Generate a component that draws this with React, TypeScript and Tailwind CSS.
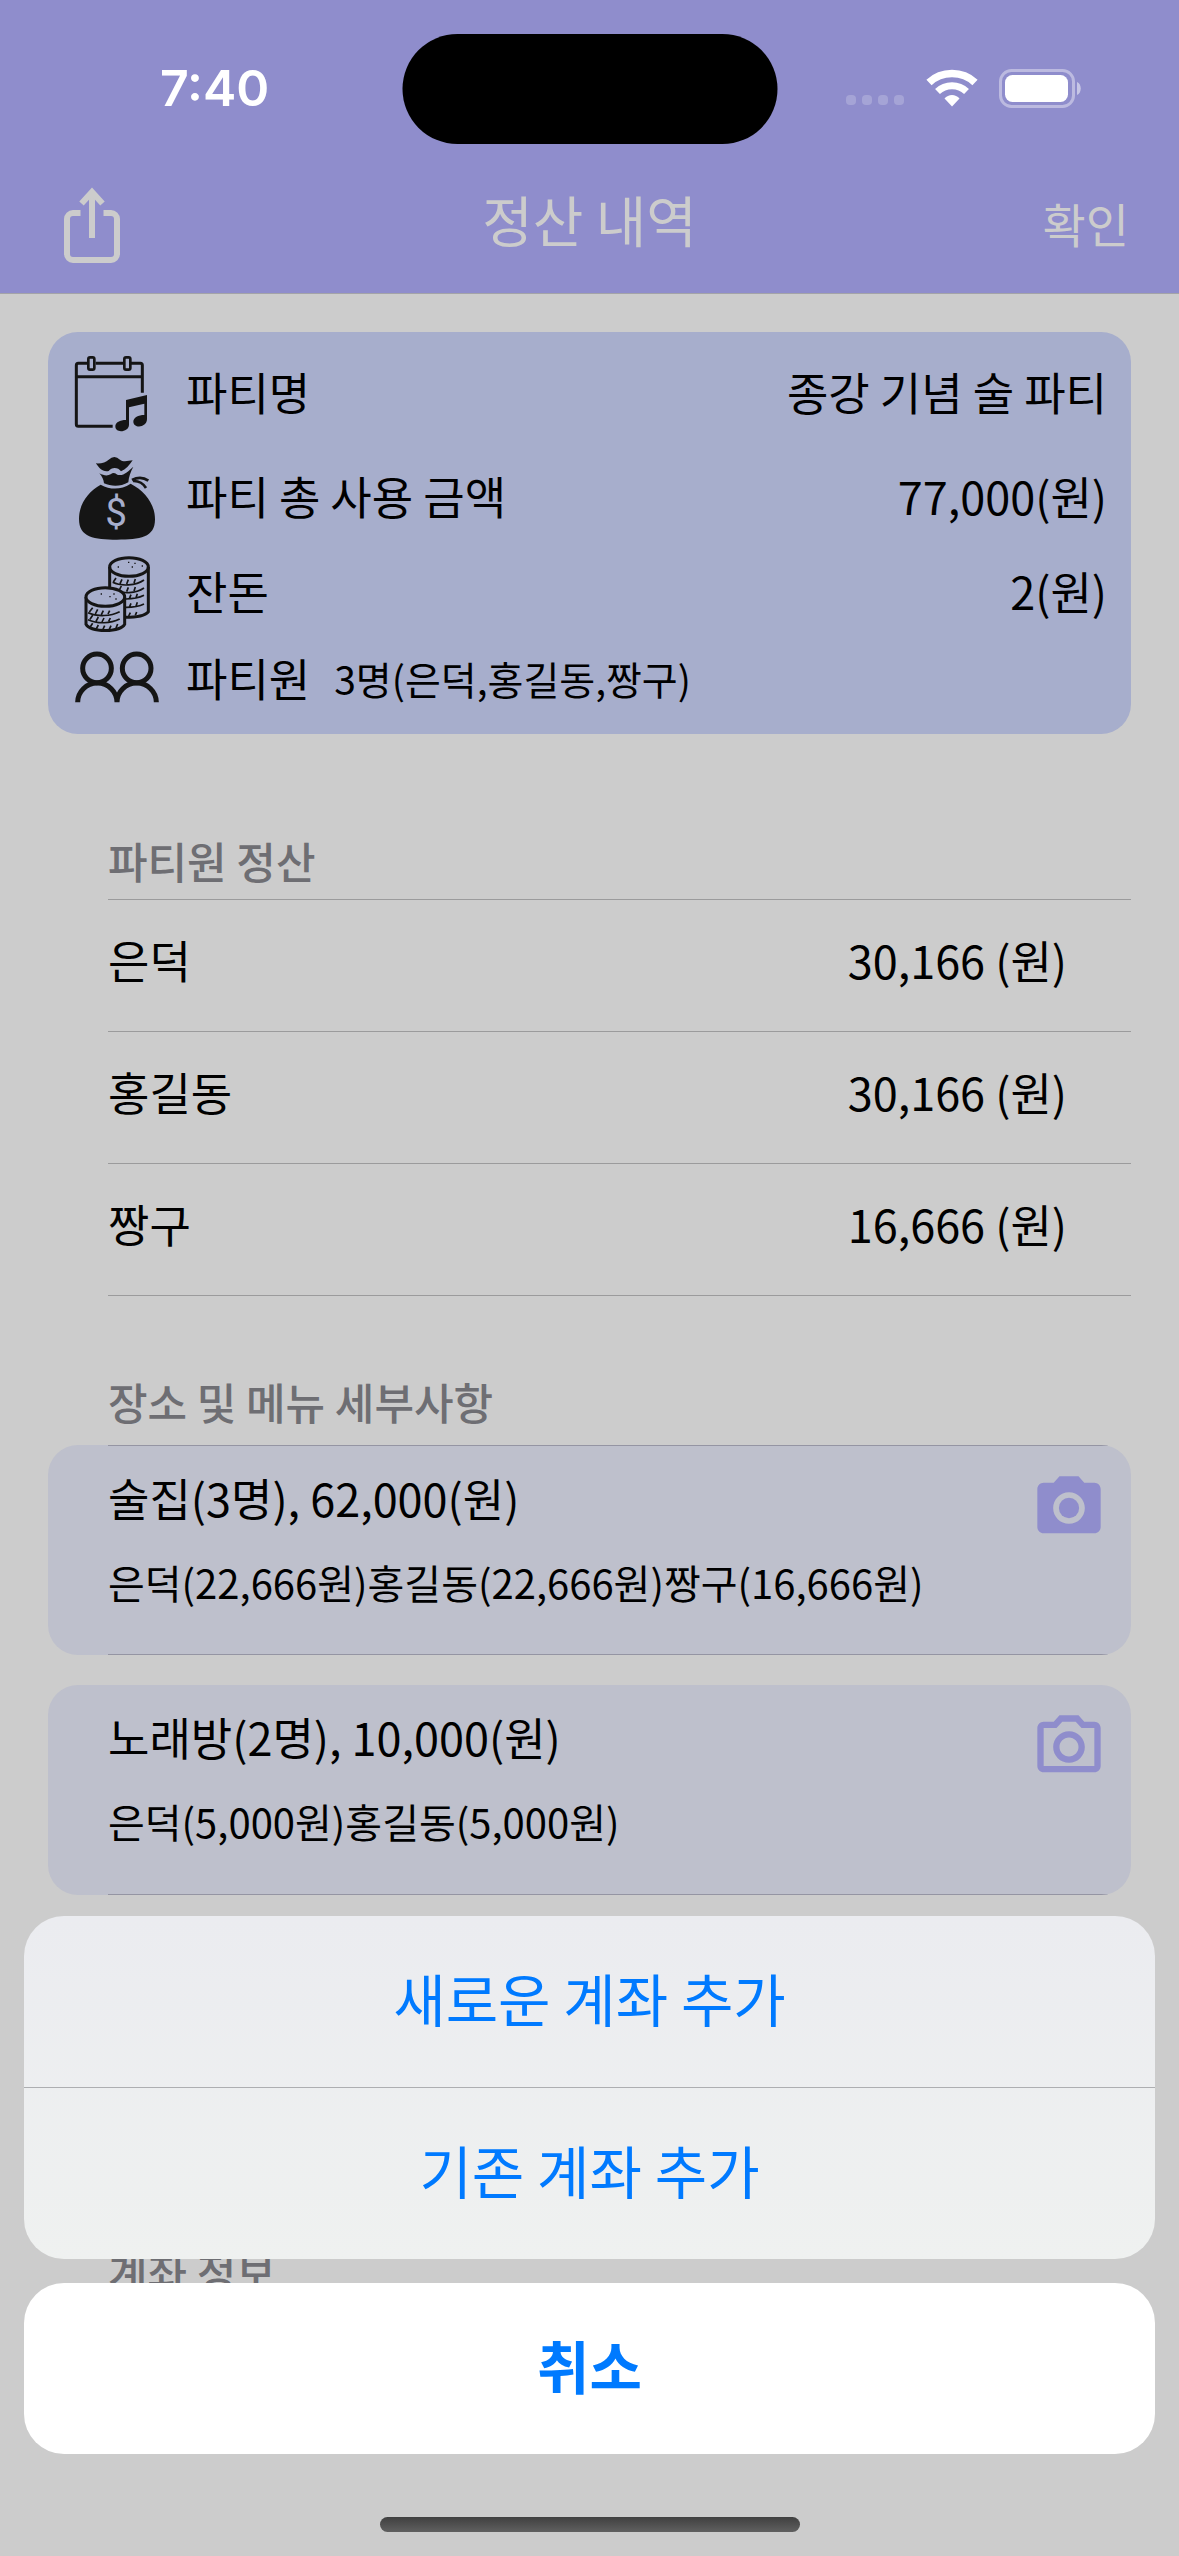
import React from "react";
import { MdOutlinePhotoCamera, MdPhotoCamera } from "react-icons/md";

interface SummaryRowProps {
  icon: React.ReactNode;
  label: string;
  value: string;
  className: string;
}

interface Settlement {
  name: string;
  amount: string;
}

interface Place {
  title: string;
  detail: string;
  hasPhoto: boolean;
}

const settlements: Settlement[] = [
  { name: "은덕", amount: "30,166 (원)" },
  { name: "홍길동", amount: "30,166 (원)" },
  { name: "짱구", amount: "16,666 (원)" }
];

const places: Place[] = [
  {
    title: "술집(3명), 62,000(원)",
    detail: "은덕(22,666원)홍길동(22,666원)짱구(16,666원)",
    hasPhoto: true
  },
  {
    title: "노래방(2명), 10,000(원)",
    detail: "은덕(5,000원)홍길동(5,000원)",
    hasPhoto: false
  }
];

const ShareIcon = () => (
  <svg width="60" height="80" viewBox="0 0 60 80" fill="none" stroke="currentColor" strokeWidth="6" aria-hidden="true">
    <path d="M18.5 30H11a6 6 0 0 0-6 6v35a6 6 0 0 0 6 6h38a6 6 0 0 0 6-6V36a6 6 0 0 0-6-6h-7.5" />
    <path d="M30 55V11" />
    <path d="M19.500 20.500L30 9l10.500 11.500" />
  </svg>
);

const WifiIcon = () => (
  <svg width="52" height="38" viewBox="0 0 52 38" fill="none" stroke="currentColor" aria-hidden="true">
    <path d="M3 13.5C15.5 1.5 36.5 1.5 49 13.5" strokeWidth="7.5" />
    <path d="M11.5 22.500C19.5 14.8 32.5 14.8 40.5 22.5" strokeWidth="7" />
    <path d="M26 37.5l-7.5-8c3.8-4.700 11.2-4.700 15 0z" fill="currentColor" stroke="none" />
  </svg>
);

const BatteryIcon = () => (
  <svg width="82" height="39" viewBox="0 0 82 39" fill="none" aria-hidden="true">
    <rect x="1.5" y="1.5" width="73" height="36" rx="11" stroke="white" strokeOpacity="0.4" strokeWidth="3" />
    <rect x="6" y="6" width="63" height="27" rx="7.5" fill="white" />
    <path d="M78 13c5 2 5 11 0 13z" fill="white" fillOpacity="0.5" />
  </svg>
);

const CalendarIcon = () => (
  <svg width="90" height="80" viewBox="36 45 270 240" fill="none" stroke="#151515" aria-hidden="true">
    <path
      d="M247 158V76q0-6-6-6h-28M191 70h-84M83 70H55q-6 0-6 6v177q0 6 6 6h103M49 110h198"
      strokeWidth="9"
    />
    <rect x="85" y="52" width="18" height="37" rx="5" strokeWidth="8" />
    <rect x="193" y="52" width="18" height="37" rx="5" strokeWidth="8" />
    <path
      d="M198 180l63-15v72c0 26-40 30-41 8 0-12 15-20 33-20v-34l-46 11v52c0 22-41 28-41 5 0-12 14-19 32-19z"
      fill="#151515"
      stroke="none"
    />
  </svg>
);

const MoneyBagIcon = () => (
  <svg width="90" height="86" viewBox="36 348 270 258" fill="#151515" aria-hidden="true">
    <path d="M108 370c17 1 30-3 38-11q17-16 34 0c10 8 25 3 38 2-10 15-21 27-35 33-8-13-28-14-37-1-18 4-30-10-38-23z" />
    <path d="M118 400c13 7 25 8 34 3q10-9 20 1c18 5 32-9 48-24-8 15-14 31-15 47-24 14-51 13-73 3-1-12-6-21-14-30z" />
    <path d="M122 434c30 16 60 16 90-3 44 23 73 62 73 107 0 55-45 61-114 61S57 592 57 537c0-45 27-82 65-103z" />
    <path d="M216 420c17-9 35-8 49 2M219 423c18-1 31 8 39 21" fill="none" stroke="#151515" strokeWidth="8" />
    <text x="168" y="559" textAnchor="middle" fontSize="116" fontFamily="Roboto, sans-serif" fill="#a7aecc">
      $
    </text>
  </svg>
);

const CoinsIcon = () => (
  <svg width="90" height="78" viewBox="36 645 270 234" fill="none" stroke="#151515" strokeWidth="9" aria-hidden="true">
    <path d="M149 681v66M265 681v134c-10 12-38 17-70 17" />
    <ellipse cx="207" cy="681" rx="58" ry="28" />
    <path
      d="M158 727c26 13 70 10 94-7M158 748c32 16 70 12 94-4M198 777c22 0 40-4 54-11M198 802c22 0 40-3 54-10M160 726l8-12M180 731l6-13M200 732l5-13M222 729l4-12M178 750l6-12M200 755l5-13M222 753l4-12M208 776l5-12M228 773l4-12M208 802l5-12M228 799l4-12M206 828l5-10M226 826l4-10"
      strokeWidth="5"
    />
    <path d="M78 771v82c14 25 102 25 116 0v-82" fill="#a7aecc" />
    <ellipse cx="136" cy="771" rx="58" ry="28" fill="#a7aecc" />
    <path
      d="M84 818c28 13 68 11 95-3M84 839c28 13 68 12 95-2M88 816l10-13M106 822l7-14M124 824l6-12M144 822l5-10M90 838l8-12M108 844l7-13M126 846l6-12M146 844l5-10M90 862l8-12M108 868l7-13M128 870l6-13M148 868l5-11M168 864l5-12"
      strokeWidth="5"
    />
    <path d="M173 681h4M204 667h4M223 670h4M215 681h4M245 678h4M122 762h4M148 770h4M160 762h4M166 777h4" strokeWidth="4" />
  </svg>
);

const PeopleIcon = () => (
  <svg width="90" height="60" viewBox="36 936 270 180" fill="none" stroke="#151515" strokeWidth="15" aria-hidden="true">
    <circle cx="111" cy="988" r="43" />
    <circle cx="230" cy="988" r="43" />
    <path d="M53 1090a59 58 0 0 1 118 0a59 58 0 0 1 118 0" />
  </svg>
);

const SummaryRow: React.FC<SummaryRowProps> = ({ icon, label, value, className }) => (
  <div className={`flex items-center gap-6 text-[45px] ${className}`}>
    {icon}
    <dt className="pb-[6px]">{label}</dt>
    <dd className="ml-auto pb-[6px]">{value}</dd>
  </div>
);

const StatusBar = () => (
  <div className="relative flex h-[152px] items-center justify-between pt-6 pr-[98px] pl-40 text-white">
    <span className="font-[Inter] text-[50px] leading-none font-semibold">7:40</span>
    <div className="absolute top-[34px] left-1/2 h-[110px] w-[375px] -translate-x-1/2 rounded-full bg-black" />
    <div className="flex items-center">
      <div className="mt-6 mr-[22px] flex gap-[6px] opacity-20">
        <span className="size-[10px] rounded-[4px] bg-white" />
        <span className="size-[10px] rounded-[4px] bg-white" />
        <span className="size-[10px] rounded-[4px] bg-white" />
        <span className="size-[10px] rounded-[4px] bg-white" />
      </div>
      <WifiIcon />
      <span className="w-[21px]" />
      <BatteryIcon />
    </div>
  </div>
);

const PlaceCard: React.FC<{ place: Place; isFirst: boolean }> = ({ place, isFirst }) => (
  <li className="overflow-hidden rounded-[30px] bg-[#bec0cc] pl-[60px]">
    <div
      className={`flex h-[210px] items-start justify-between border-b border-[#9595a3] pt-5 pr-6 ${
        isFirst ? "border-t" : ""
      }`}
    >
      <div>
        <h3 className="text-[45px] leading-[64px]">{place.title}</h3>
        <p className="mt-5 text-[40px] leading-[64px]">{place.detail}</p>
      </div>
      <button type="button" aria-label="사진" className="mt-1 text-[#8f8dcc]">
        {place.hasPhoto ? <MdPhotoCamera size={76} /> : <MdOutlinePhotoCamera size={76} />}
      </button>
    </div>
  </li>
);

const ActionSheet = () => (
  <div className="absolute inset-x-0 bottom-0 px-6 pb-6 text-[57px] text-[#007aff]" role="dialog" aria-modal="true">
    <div className="flex flex-col overflow-hidden rounded-[40px] bg-gradient-to-b from-[#ebecf0] to-[#eff1f0]">
      <button type="button" className="h-[172px] border-b border-[#adaeb1] pb-2">
        새로운 계좌 추가
      </button>
      <button type="button" className="h-[171px] pb-2">
        기존 계좌 추가
      </button>
    </div>
    <button type="button" className="mt-6 h-[171px] w-full rounded-[40px] bg-white pb-2 font-bold">
      취소
    </button>
    <div className="mx-auto mt-[63px] h-[15px] w-[420px] rounded-full bg-gradient-to-b from-[#404040] to-[#606060]" />
  </div>
);

export default function App() {
  return (
    <div className="relative min-h-screen bg-[#cccccc] font-['Noto_Sans_CJK_KR',sans-serif] text-black">
      <header className="border-b border-[#a3a3a8] bg-[#8f8dcc] text-[#cccccc]">
        <StatusBar />
        <nav className="grid h-[141px] grid-cols-3 items-center px-[50px]">
          <button type="button" aria-label="공유" className="justify-self-start pl-3">
            <ShareIcon />
          </button>
          <h1 className="pb-2 text-center text-[55px] leading-none">정산 내역</h1>
          <button type="button" className="justify-self-end text-[47px] leading-none">
            확인
          </button>
        </nav>
      </header>

      <main className="px-12 pt-[38px]">
        <dl className="rounded-[30px] bg-[#a7aecc] px-6 pt-[11px] pb-[9px]">
          <SummaryRow icon={<CalendarIcon />} label="파티명" value="종강 기념 술 파티" className="h-[104px]" />
          <SummaryRow icon={<MoneyBagIcon />} label="파티 총 사용 금액" value="77,000(원)" className="h-[104px]" />
          <SummaryRow icon={<CoinsIcon />} label="잔돈" value="2(원)" className="h-[86px]" />
          <div className="flex h-[88px] items-center gap-6 text-[45px]">
            <PeopleIcon />
            <dt className="pb-[6px]">파티원</dt>
            <dd className="pb-[6px] text-[39px]">3명(은덕,홍길동,짱구)</dd>
          </div>
        </dl>

        <section className="pt-[98px] pl-[60px]">
          <h2 className="pb-[11px] text-[43px] leading-[56px] font-medium text-[#6e6e73]">파티원 정산</h2>
          <table className="w-full border-t border-[#9b9b9c] text-[45px]">
            <tbody>
              {settlements.map((item) => (
                <tr key={item.name} className="h-[132px] border-b border-[#9b9b9c]">
                  <th scope="row" className="pb-3 text-left font-normal">
                    {item.name}
                  </th>
                  <td className="pr-16 pb-3 text-right">{item.amount}</td>
                </tr>
              ))}
            </tbody>
          </table>
        </section>

        <section className="pt-[77px]">
          <h2 className="pb-4 pl-[60px] text-[43px] leading-[56px] font-medium text-[#6e6e73]">
            장소 및 메뉴 세부사항
          </h2>
          <ul className="flex flex-col gap-[30px]">
            {places.map((place, index) => (
              <PlaceCard key={place.title} place={place} isFirst={index === 0} />
            ))}
          </ul>
        </section>

        <h2 className="pt-[348px] pl-[60px] text-[43px] leading-[56px] font-medium text-[#6e6e73]">계좌 정보</h2>
      </main>

      <ActionSheet />
    </div>
  );
}
